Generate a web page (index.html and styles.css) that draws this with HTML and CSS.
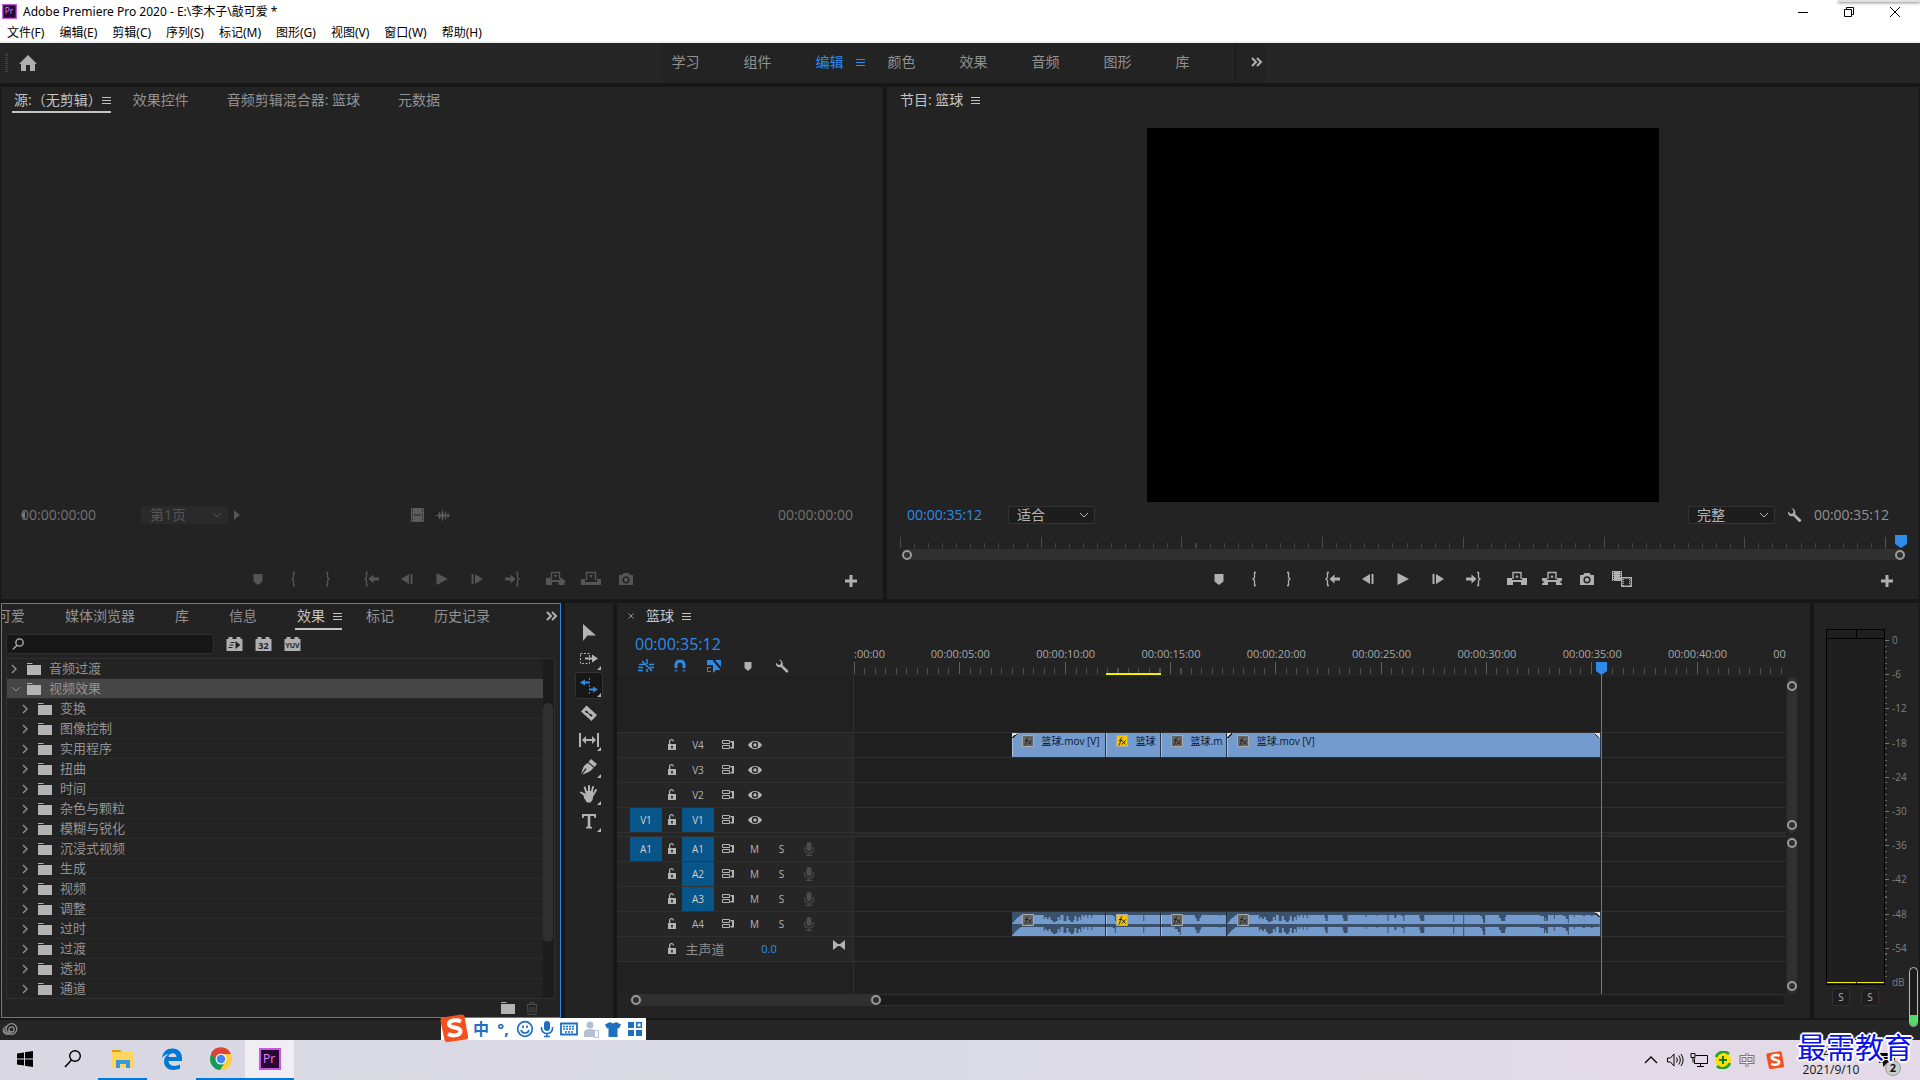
FILE: index.html
```html
<!DOCTYPE html>
<html lang="zh-CN">
<head>
<meta charset="utf-8">
<title>Adobe Premiere Pro 2020</title>
<link rel="stylesheet" href="styles.css">
</head>
<body>
<svg class="sprite" aria-hidden="true">
  <symbol id="menu" viewBox="0 0 9 9"><path d="M0 1h9M0 4h9M0 7h9" transform="translate(0 .5)" stroke="currentColor" fill="none"/></symbol>
  <symbol id="more" viewBox="0 0 12 10"><path d="M1 1l4 4-4 4M6 1l4 4-4 4" stroke="currentColor" stroke-width="2" fill="none"/></symbol>
  <symbol id="down" viewBox="0 0 10 6"><path d="M1 1l4 4 4-4" stroke="currentColor" fill="none"/></symbol>
  <symbol id="right" viewBox="0 0 6 10"><path d="M1 1l4 4-4 4" stroke="currentColor" stroke-width="1.400" fill="none"/></symbol>
  <symbol id="marker" viewBox="0 0 20 16"><path d="M5.500 3h9v7.500L10 14 5.500 10.500z"/></symbol>
  <symbol id="brace-l" viewBox="0 0 20 16"><path d="M12 1.500h-1.500V6.500L9 8l1.500 1.500v5H12" stroke="currentColor" stroke-width="1.300" fill="none"/></symbol>
  <symbol id="brace-r" viewBox="0 0 20 16"><path d="M8 1.500h1.500V6.500L11 8 9.500 9.500v5H8" stroke="currentColor" stroke-width="1.300" fill="none"/></symbol>
  <symbol id="goto-in" viewBox="0 0 20 16"><path d="M6 1.500H4.500V6.500L3 8l1.500 1.500v5H6" stroke="currentColor" stroke-width="1.300" fill="none"/><path d="M6.500 8l5-4.500v3H17v3h-5.500v3z"/></symbol>
  <symbol id="goto-out" viewBox="0 0 20 16"><path d="M14 1.500h1.500V6.500L17 8l-1.500 1.500v5H14" stroke="currentColor" stroke-width="1.300" fill="none"/><path d="M13.500 8l-5-4.500v3H3v3h5.500v3z"/></symbol>
  <symbol id="step-back" viewBox="0 0 20 16"><path d="M12 3v10L4 8zM13.500 3h2v10h-2z"/></symbol>
  <symbol id="step-fwd" viewBox="0 0 20 16"><path d="M8 3v10l8-5zM4.500 3h2v10h-2z"/></symbol>
  <symbol id="play" viewBox="0 0 20 16"><path d="M4.500 2v12L16 8z"/></symbol>
  <symbol id="insert" viewBox="0 0 20 16"><path d="M5.500 8V1.500h8V8" stroke="currentColor" stroke-width="1.400" fill="none"/><path d="M7.500 4h4L9.500 6.500zM0 7h5v2h9V7h2l4 3.500-1.500 1V14h-6v-3H6v3H0z"/></symbol>
  <symbol id="overwrite" viewBox="0 0 20 16"><path d="M5.500 9V1.500h9V9" stroke="currentColor" stroke-width="1.400" fill="none"/><path d="M8 4h4l-2 3zM0 8h4v3h12V8h4v6H0z"/></symbol>
  <symbol id="lift" viewBox="0 0 20 16"><path d="M6 8V1.500h8V8" stroke="currentColor" stroke-width="1.400" fill="none"/><path d="M8 6.500h4L10 4zM0 7h5v2h10V7h5v7h-6v-3H6v3H0z"/></symbol>
  <symbol id="extract" viewBox="0 0 20 16"><path d="M6 8V1.500h8V8" stroke="currentColor" stroke-width="1.400" fill="none"/><path d="M8 6.500h4L10 4zM0 7h5v2h10V7h5v2.500L17.500 11l2.500 1.500V14h-6v-3H6v3H0v-1.500L2.500 11 0 9.500z"/></symbol>
  <symbol id="camera" viewBox="0 0 20 16"><path fill-rule="evenodd" d="M3 4h3l1.500-2h5L14 4h3v10H3zM10 5.200a3.600 3.600 0 1 0 0 7.200 3.600 3.600 0 0 0 0-7.200zm0 1.500a2.100 2.100 0 1 1 0 4.200 2.100 2.100 0 0 1 0-4.200z"/></symbol>
  <symbol id="compare" viewBox="0 0 20 16"><path d="M0 0h10v10H0z"/><path d="M9.700 6.700h9.600v8.600H9.700z" fill="#232323" stroke="currentColor" stroke-width="1.400"/><path d="M1.500 1v9M8.500 1v5" stroke="#232323" stroke-dasharray="1 1"/><path d="M11.500 8v7M17.500 8v7" stroke="currentColor" stroke-dasharray="1 1"/></symbol>
  <symbol id="plus" viewBox="0 0 12 12"><path d="M4.500 0h3v4.500H12v3H7.500V12h-3V7.500H0v-3h4.500z"/></symbol>
  <symbol id="wrench" viewBox="0 0 16 16"><path d="M4.500.8 7 3.300 6.500 6 4 6.800 1.200 4.200C.6 6.500 1.800 9 4.500 9.300c.9.100 1.600 0 2.200-.2l5.800 6c1.600 1.200 3.600-.6 2.300-2.300L8.700 7.200C9.700 4 7.500.6 4.500.8z"/></symbol>
  <symbol id="folder" viewBox="0 0 14 12"><path d="M0 0h5.500v1H0zM0 2h14v10H0z"/></symbol>
  <symbol id="lock" viewBox="0 0 10 12"><path fill-rule="evenodd" d="M1 6V5h1V2.500C2 1 3 0 4.500 0S7 1 7 2.500H5.800C5.800 1.600 5.300 1.200 4.500 1.200S3.300 1.600 3.300 2.500V5H9v6H1zM4 7v1.500h.5V10h1V8.500H6V7z"/></symbol>
  <symbol id="sync" viewBox="0 0 12 10"><path d="M.5.500h7v3h-7zM.5 5.500h7v3h-7z" fill="none" stroke="currentColor"/><path d="M8.500 1H12v7.500H8.500V7H10V2.500H8.500z"/></symbol>
  <symbol id="eye" viewBox="0 0 14 10"><path fill-rule="evenodd" d="M0 5C3-.5 11-.5 14 5 11 10.500 3 10.500 0 5zm7-3.200a3.200 3.200 0 1 0 0 6.400 3.200 3.200 0 0 0 0-6.400z"/><circle cx="7" cy="5" r="1.700"/></symbol>
  <symbol id="mic" viewBox="0 0 10 14"><rect x="2.500" width="5" height="9" rx="2.500"/><path d="M.7 5v2.500C.7 10 2.500 11 5 11s4.300-1 4.300-3.500V5M5 11v2.500M2 13.400h6" fill="none" stroke="currentColor" stroke-width="1.100"/></symbol>
  <symbol id="sogou" viewBox="0 0 28 28"><path d="M3 3.500 21 .5q3-.5 3.500 2L28 22q.5 3-2 3.500L8 28q-3 .5-3.500-2L.5 7Q0 4 3 3.500z" fill="#f4511e"/><path d="M21 7.500C16 5 8.500 6.500 9 10.500c.5 4 11 2 11.500 6.500.3 4.500-7.500 5.500-12.500 3" fill="none" stroke="#fff" stroke-width="4"/></symbol>
  <symbol id="fx" viewBox="0 0 12 12"><path d="M.5.500h11v11H.5z"/><path d="M2.500 10.500C4.500 10.500 4 2.500 6.300 2.500M3 5.500h3M6 5.500l3.500 4M9.800 5.500 5.600 9.500" fill="none" stroke="#222" stroke-width="1"/></symbol>
  <symbol id="pr" viewBox="0 0 22 22"><path d="M1 1h20v20H1z" fill="#2a0634" stroke="#c45ae0" stroke-width="2"/><text x="4" y="15" font-size="12" fill="#e38bff" font-family="Open Sans, sans-serif">Pr</text></symbol>
</svg>

<header class="window-head">
  <div class="title-bar">
    <svg class="app-icon"><use href="#pr"/></svg>
    <h1>Adobe Premiere Pro 2020 - E:\李木子\敲可爱 *</h1>
    <div class="window-buttons">
      <button aria-label="最小化"><svg viewBox="0 0 10 10"><path d="M0 5.500h10" stroke="#000"/></svg></button>
      <button aria-label="还原"><svg viewBox="0 0 10 10"><path d="M.5 2.500h7v7h-7zM2.500 2.500v-2h7v7h-2" fill="none" stroke="#000"/></svg></button>
      <button aria-label="关闭"><svg viewBox="0 0 10 10"><path d="M0 0l10 10M10 0L0 10" stroke="#000"/></svg></button>
    </div>
  </div>
  <nav class="menu-bar">
    <button>文件(F)</button><button>编辑(E)</button><button>剪辑(C)</button><button>序列(S)</button><button>标记(M)</button><button>图形(G)</button><button>视图(V)</button><button>窗口(W)</button><button>帮助(H)</button>
  </nav>
  <div class="corner-popup"></div>
</header>

<nav class="workspace-bar">
  <div class="grip"></div>
  <button class="home" aria-label="主页"><svg viewBox="0 0 18 16"><path d="M9 0l9 9h-2v7h-5v-6H7v6H2V9H0z"/></svg></button>
  <div class="workspaces">
    <button>学习</button><button>组件</button><button class="on">编辑<svg class="menu-i"><use href="#menu"/></svg></button><button>颜色</button><button>效果</button><button>音频</button><button>图形</button><button class="last">库</button>
    <button class="overflow" aria-label="更多"><svg class="more-i"><use href="#more"/></svg></button>
  </div>
</nav>

<main class="panels">
  <div class="row-top">
    <section class="panel monitor source">
      <div class="tabs">
        <button class="on line">源:（无剪辑）<svg class="menu-i"><use href="#menu"/></svg></button><button>效果控件</button><button>音频剪辑混合器: 篮球</button><button>元数据</button>
      </div>
      <div class="viewer"></div>
      <div class="info dim">
        <span class="tc start">00:00:00:00</span>
        <button class="drop page">第1页<svg class="down-i"><use href="#down"/></svg></button>
        <button class="next" aria-label="下一页"><svg viewBox="0 0 6 10"><path d="M0 0l6 5-6 5z"/></svg></button>
        <span class="media"><svg viewBox="0 0 40 14"><path fill-rule="evenodd" d="M0 0h13v14H0zM3 6.500v1h7v-1z"/><path d="M1.500 1v13M11.500 1v13" stroke="#232323" stroke-dasharray="1 1"/><path d="M25 7h14v1H25zM27 7.500l1.500-4 1.500 4-1.500 4zM30 7.500l1.500-6.500 1.500 6.500-1.500 6.500zM33.500 7.500l1-5 1 5-1 5zM36 7.500l1-3 1 3-1 3z"/></svg></span>
        <span class="tc">00:00:00:00</span>
      </div>
      <div class="transport dim">
        <div class="group"><button aria-label="标记"><svg><use href="#marker"/></svg></button><button aria-label="入点"><svg><use href="#brace-l"/></svg></button><button aria-label="出点"><svg><use href="#brace-r"/></svg></button></div>
        <div class="group"><button aria-label="转到入点"><svg><use href="#goto-in"/></svg></button><button aria-label="后退一帧"><svg><use href="#step-back"/></svg></button><button aria-label="播放"><svg><use href="#play"/></svg></button><button aria-label="前进一帧"><svg><use href="#step-fwd"/></svg></button><button aria-label="转到出点"><svg><use href="#goto-out"/></svg></button></div>
        <div class="group"><button aria-label="插入"><svg><use href="#insert"/></svg></button><button aria-label="覆盖"><svg><use href="#overwrite"/></svg></button><button aria-label="导出帧"><svg><use href="#camera"/></svg></button></div>
        <button class="add" aria-label="按钮编辑器"><svg><use href="#plus"/></svg></button>
      </div>
    </section>

    <section class="panel monitor program">
      <div class="tabs"><button class="on">节目: 篮球<svg class="menu-i"><use href="#menu"/></svg></button></div>
      <div class="viewer"><div class="frame"></div></div>
      <div class="info">
        <span class="tc blue">00:00:35:12</span>
        <button class="drop fit">适合<svg class="down-i"><use href="#down"/></svg></button>
        <button class="drop quality">完整<svg class="down-i"><use href="#down"/></svg></button>
        <button class="settings" aria-label="设置"><svg><use href="#wrench"/></svg></button>
        <span class="tc">00:00:35:12</span>
      </div>
      <div class="mini-ruler"><div class="ticks"></div><svg class="head" viewBox="0 0 12 13"><path d="M0 0h12v9l-6 4-6-4z"/></svg></div>
      <div class="zoom-bar"><i></i><i></i></div>
      <div class="transport">
        <div class="group"><button aria-label="标记"><svg><use href="#marker"/></svg></button><button aria-label="入点"><svg><use href="#brace-l"/></svg></button><button aria-label="出点"><svg><use href="#brace-r"/></svg></button></div>
        <div class="group"><button aria-label="转到入点"><svg><use href="#goto-in"/></svg></button><button aria-label="后退一帧"><svg><use href="#step-back"/></svg></button><button aria-label="播放"><svg><use href="#play"/></svg></button><button aria-label="前进一帧"><svg><use href="#step-fwd"/></svg></button><button aria-label="转到出点"><svg><use href="#goto-out"/></svg></button></div>
        <div class="group"><button aria-label="提升"><svg><use href="#lift"/></svg></button><button aria-label="提取"><svg><use href="#extract"/></svg></button><button aria-label="导出帧"><svg><use href="#camera"/></svg></button><button aria-label="比较视图"><svg><use href="#compare"/></svg></button></div>
        <button class="add" aria-label="按钮编辑器"><svg><use href="#plus"/></svg></button>
      </div>
    </section>
  </div>

  <div class="row-bottom">
    <section class="panel effects">
      <div class="tabs">
        <button class="cut">可爱</button><button>媒体浏览器</button><button>库</button><button>信息</button><button class="on line">效果<svg class="menu-i"><use href="#menu"/></svg></button><button>标记</button><button>历史记录</button>
        <button class="tabs-more" aria-label="更多"><svg class="more-i"><use href="#more"/></svg></button>
      </div>
      <div class="filters">
        <label class="search"><svg viewBox="0 0 12 12"><circle cx="7.500" cy="4.500" r="3.700"/><path d="M5 7.200.8 11.400"/></svg><input type="text" aria-label="搜索效果"></label>
        <button class="badge" aria-label="加速效果"><svg viewBox="0 0 16 14"><path d="M0 2h2V0h4v2h4V0h4v2h2v12H0z"/><path d="M9 4v8l5-4z" fill="#232323"/><path d="M4 5.500h4M3 8h4M2 10.500h4" stroke="#232323"/></svg></button>
        <button class="badge" aria-label="32 位颜色"><svg viewBox="0 0 16 14"><path d="M0 2h2V0h4v2h4V0h4v2h2v12H0z"/><text x="8" y="12" font-size="9" font-weight="700" text-anchor="middle" fill="#232323">32</text></svg></button>
        <button class="badge" aria-label="YUV 效果"><svg viewBox="0 0 16 14"><path d="M0 2h2V0h4v2h4V0h4v2h2v12H0z"/><text x="8" y="11" font-size="7" font-weight="700" text-anchor="middle" fill="#232323">YUV</text></svg></button>
      </div>
      <div class="tree">
        <ul>
          <li class="root"><svg class="right-i"><use href="#right"/></svg><svg class="folder-i"><use href="#folder"/></svg>音频过渡</li>
          <li class="root open"><svg class="down-i"><use href="#down"/></svg><svg class="folder-i"><use href="#folder"/></svg>视频效果</li>
          <li><svg class="right-i"><use href="#right"/></svg><svg class="folder-i"><use href="#folder"/></svg>变换</li>
          <li><svg class="right-i"><use href="#right"/></svg><svg class="folder-i"><use href="#folder"/></svg>图像控制</li>
          <li><svg class="right-i"><use href="#right"/></svg><svg class="folder-i"><use href="#folder"/></svg>实用程序</li>
          <li><svg class="right-i"><use href="#right"/></svg><svg class="folder-i"><use href="#folder"/></svg>扭曲</li>
          <li><svg class="right-i"><use href="#right"/></svg><svg class="folder-i"><use href="#folder"/></svg>时间</li>
          <li><svg class="right-i"><use href="#right"/></svg><svg class="folder-i"><use href="#folder"/></svg>杂色与颗粒</li>
          <li><svg class="right-i"><use href="#right"/></svg><svg class="folder-i"><use href="#folder"/></svg>模糊与锐化</li>
          <li><svg class="right-i"><use href="#right"/></svg><svg class="folder-i"><use href="#folder"/></svg>沉浸式视频</li>
          <li><svg class="right-i"><use href="#right"/></svg><svg class="folder-i"><use href="#folder"/></svg>生成</li>
          <li><svg class="right-i"><use href="#right"/></svg><svg class="folder-i"><use href="#folder"/></svg>视频</li>
          <li><svg class="right-i"><use href="#right"/></svg><svg class="folder-i"><use href="#folder"/></svg>调整</li>
          <li><svg class="right-i"><use href="#right"/></svg><svg class="folder-i"><use href="#folder"/></svg>过时</li>
          <li><svg class="right-i"><use href="#right"/></svg><svg class="folder-i"><use href="#folder"/></svg>过渡</li>
          <li><svg class="right-i"><use href="#right"/></svg><svg class="folder-i"><use href="#folder"/></svg>透视</li>
          <li><svg class="right-i"><use href="#right"/></svg><svg class="folder-i"><use href="#folder"/></svg>通道</li>
        </ul>
        <div class="tree-scroll"><i></i></div>
      </div>
      <div class="tree-foot">
        <button aria-label="新建素材箱"><svg class="folder-i"><use href="#folder"/></svg></button>
        <button aria-label="删除"><svg class="trash" viewBox="0 0 12 13"><path d="M.5 2.500h11M4 2.500V.5h4v2M1.500 2.500l.5 10h8l.5-10M4 5v5.500M6 5v5.500M8 5v5.500" fill="none" stroke="#4a4a4a"/></svg></button>
      </div>
    </section>

    <section class="panel tools">
      <button aria-label="选择"><svg viewBox="0 0 20 20"><path d="M4 2v17l4.500-5.500H17z"/></svg></button>
      <button class="sub" aria-label="向前选择轨道"><svg viewBox="0 0 20 20"><path d="M1.500 4.500h9v10h-9z" fill="none" stroke="currentColor" stroke-dasharray="2 1.500"/><path d="M6 8.500h7V5.500l6 4-6 4v-3H6z"/></svg></button>
      <button class="sub on" aria-label="波纹编辑"><svg viewBox="0 0 20 20"><path d="M1 6.500 6 3.500v2h4v2H6v2zM19 13.500l-5 3v-2h-3v-2h3v-2z"/><path d="M10.500 2v17" stroke="currentColor" stroke-dasharray="2 1.500"/></svg></button>
      <button aria-label="剃刀"><svg viewBox="0 0 20 20"><path fill-rule="evenodd" d="M7.500 2.500 18 12l-5.500 6L2 8.500zM7 7.500l-1.200 1 1.500 1.500 2 .5 1.500 2 1.800 1.200 1-1-1.500-1.700-2-.5-1.500-2z"/></svg></button>
      <button class="sub" aria-label="外滑"><svg viewBox="0 0 20 20"><path d="M1 3v14M19 3v14" stroke="currentColor" stroke-width="2"/><path d="M3 10l4-4v3h6V6l4 4-4 4v-3H7v3z"/></svg></button>
      <button class="sub" aria-label="钢笔"><svg viewBox="0 0 20 20"><path d="M12 2l6 5-2.500 3-6-5zM9 6l5.500 4.500C13 14 8 16 3.500 17.500L7.500 12 6.500 11 2.500 17C3 12 5 7.500 9 6z"/></svg></button>
      <button class="sub" aria-label="手形"><svg viewBox="0 0 20 20"><path d="M6 11 2 8.500M7.500 9 5.800 3.500M10 9V2M12.500 9l1.500-6M14 11l3-5" stroke="currentColor" stroke-width="2" stroke-linecap="round"/><path d="M4 8.500 7 10l.5-3h6l1 3-1 6-2 2.500H8L5 14z"/></svg></button>
      <button class="sub" aria-label="文字"><svg viewBox="0 0 20 20"><path d="M3 3h14v4h-1.500l-.5-2h-3.700v10.500L13 16v1.500H7V16l1.700-.5V5H5l-.5 2H3z"/></svg></button>
    </section>

    <section class="panel timeline">
      <div class="tabs seq"><button class="close" aria-label="关闭序列"><svg viewBox="0 0 6 6"><path d="M.5.500l5 5M5.500.500l-5 5" stroke="currentColor"/></svg></button><button class="on">篮球<svg class="menu-i"><use href="#menu"/></svg></button></div>
      <div class="tl-body">
        <div class="tl-main">
          <div class="tl-top">
            <div class="tl-control">
              <span class="big-tc">00:00:35:12</span>
              <div class="toggles">
                <button aria-label="嵌套"><svg viewBox="0 0 16 14"><path d="M9 0v5M9 10v3M1 5.500h5M0 8.500h5M0 11.500h5M11 5.500h5M12 8.500h4M4 2l10 10" stroke="currentColor" stroke-width="1.500"/></svg></button>
                <button aria-label="对齐"><svg viewBox="0 0 16 14"><path d="M4 9V6.500C4 3.500 5.500 2 8 2s4 1.500 4 4.500V9" stroke="currentColor" stroke-width="3" fill="none"/><path d="M4 10v3M12 10v3" stroke="#17548f" stroke-width="3"/></svg></button>
                <button aria-label="链接选择"><svg viewBox="0 0 16 14"><path d="M1 1h6v5H1zM9 1h6v7zM7 2v12l3-3h4.500z"/><path d="M5 8.500H1.500v4H5" stroke="currentColor" fill="none"/></svg></button>
                <button class="grey" aria-label="添加标记"><svg viewBox="0 0 16 14"><path d="M4.500 3h7v6L8 12 4.500 9z"/></svg></button>
                <button class="grey" aria-label="时间轴设置"><svg><use href="#wrench"/></svg></button>
              </div>
            </div>
            <div class="ruler">
              <div class="marks">
                <div><span class="first">:00:00</span></div><div><span>00:00:05:00</span></div><div><span>00:00:10:00</span></div><div><span>00:00:15:00</span></div><div><span>00:00:20:00</span></div><div><span>00:00:25:00</span></div><div><span>00:00:30:00</span></div><div><span>00:00:35:00</span></div><div><span>00:00:40:00</span></div><div><span>00:00:45:00</span></div>
              </div>
              <div class="render" style="left:27%;width:5.900%"></div>
            </div>
          </div>

          <div class="track spacer"><div class="th"></div><div class="lane"></div></div>
          <div class="track"><div class="th"><span></span><svg class="lock"><use href="#lock"/></svg><button class="tgt">V4</button><svg class="sync"><use href="#sync"/></svg><svg class="eye"><use href="#eye"/></svg></div>
            <div class="lane clips">
              <div class="blank" style="width:16.900%"></div>
              <div class="clip in" style="width:10.100%"><svg class="fx"><use href="#fx"/></svg><span>篮球.mov [V]</span></div>
              <div class="clip" style="width:5.900%"><svg class="fx yellow"><use href="#fx"/></svg><span>篮球</span></div>
              <div class="clip" style="width:7.100%"><svg class="fx"><use href="#fx"/></svg><span>篮球.m</span></div>
              <div class="clip in out" style="width:40.100%"><svg class="fx"><use href="#fx"/></svg><span>篮球.mov [V]</span></div>
            </div></div>
          <div class="track"><div class="th"><span></span><svg class="lock"><use href="#lock"/></svg><button class="tgt">V3</button><svg class="sync"><use href="#sync"/></svg><svg class="eye"><use href="#eye"/></svg></div><div class="lane"></div></div>
          <div class="track"><div class="th"><span></span><svg class="lock"><use href="#lock"/></svg><button class="tgt">V2</button><svg class="sync"><use href="#sync"/></svg><svg class="eye"><use href="#eye"/></svg></div><div class="lane"></div></div>
          <div class="track"><div class="th"><button class="tgt sel">V1</button><svg class="lock"><use href="#lock"/></svg><button class="tgt sel">V1</button><svg class="sync"><use href="#sync"/></svg><svg class="eye"><use href="#eye"/></svg></div><div class="lane"></div></div>
          <div class="divider"></div>
          <div class="track"><div class="th"><button class="tgt sel">A1</button><svg class="lock"><use href="#lock"/></svg><button class="tgt sel">A1</button><svg class="sync"><use href="#sync"/></svg><button>M</button><button>S</button><svg class="mic"><use href="#mic"/></svg></div><div class="lane"></div></div>
          <div class="track"><div class="th"><span></span><svg class="lock"><use href="#lock"/></svg><button class="tgt sel">A2</button><svg class="sync"><use href="#sync"/></svg><button>M</button><button>S</button><svg class="mic"><use href="#mic"/></svg></div><div class="lane"></div></div>
          <div class="track"><div class="th"><span></span><svg class="lock"><use href="#lock"/></svg><button class="tgt sel">A3</button><svg class="sync"><use href="#sync"/></svg><button>M</button><button>S</button><svg class="mic"><use href="#mic"/></svg></div><div class="lane"></div></div>
          <div class="track"><div class="th"><span></span><svg class="lock"><use href="#lock"/></svg><button class="tgt">A4</button><svg class="sync"><use href="#sync"/></svg><button>M</button><button>S</button><svg class="mic"><use href="#mic"/></svg></div>
            <div class="lane clips">
              <div class="blank" style="width:16.900%"></div>
              <div class="clip in" style="width:10.100%"><svg class="wave" viewBox="0 0 94 24" preserveAspectRatio="none"><g id="w1"><path d="M0 0h94v3H81v3h-1V3h-3v3h-1V3h-3v2h-1V3h-2v5h-1V5h-2v4h-2V4h-2v4h-1v2h-3V8h-2V4h-2v5h-3V3h-3v5h-1V5h-2v4h-2v1h-3V8h-2V5h-2v2h-2V5h-2v2h-1V3H9L4 7 0 12z"/></g><use href="#w1" y="12"/></svg><svg class="fx"><use href="#fx"/></svg></div>
              <div class="clip" style="width:5.900%"><svg class="wave" viewBox="0 0 55 24" preserveAspectRatio="none"><g id="w2"><path d="M0 0h55v3H39v6h-1V3H10v6H9V4H7V3H0z"/></g><use href="#w2" y="12"/></svg><svg class="fx yellow"><use href="#fx"/></svg></div>
              <div class="clip" style="width:7.100%"><svg class="wave" viewBox="0 0 66 24" preserveAspectRatio="none"><g id="w3"><path d="M0 0h66v3h-6v1h-1V3H41l-1 3h-1v3h-3V6h-1l-1-3H20v8h-1V8h-2V5h-3V3H0z"/></g><use href="#w3" y="12"/></svg><svg class="fx"><use href="#fx"/></svg></div>
              <div class="clip in out" style="width:40.100%"><svg class="wave" viewBox="0 0 374 24" preserveAspectRatio="none"><g id="w4"><path d="M0 0h374v3h-7v1h-2V3h-6v1h-2V3h-8v2h-1V3h-5v8h-1V7h-2V4h-3V3h-8v4h-1V3h-6v6h-2V6h-1v3h-1V4h-4V3h-34v2h-1v4h-4V6h-2V3h-14v8h-2V7h-1V4h-2V3h-16v9h-1V3h-9v7h-1V3h-29v6h-4V6h-1V3h-15v6h-1V4h-2V3h-5v3h-2V3h-6v6h-1V3h-10v1h-1V3h-10v2h-1V3h-18v6h-4V6h-1V3h-15v6h-2V6h-1V3H81v3h-1V3h-3v3h-1V3h-3v2h-1V3h-2v5h-1V5h-2v4h-2V4h-2v4h-1v2h-3V8h-2V4h-2v5h-3V3h-3v5h-1V5h-2v4h-2v1h-3V8h-2V5h-2v2h-2V5h-2v2h-1V3H9L4 7 0 12z"/></g><use href="#w4" y="12"/></svg><svg class="fx"><use href="#fx"/></svg></div>
            </div></div>
          <div class="track"><div class="th master"><span></span><svg class="lock"><use href="#lock"/></svg><span class="name">主声道</span><span class="level">0.0</span><svg class="bow" viewBox="0 0 12 10"><path d="M0 0l5 4h2l5-4v10L7 6H5l-5 4z"/></svg></div><div class="lane"></div></div>
          <div class="track end"><div class="th"></div><div class="lane"></div></div>
          <div class="playhead-area"><div class="playhead" style="left:80.150%"><svg viewBox="0 0 11 13"><path d="M0 0h11v9l-5.500 4L0 9z" fill="#2d8ceb"/></svg></div></div>
        </div>
        <div class="v-bars"><div class="v-bar video"><i></i><i></i></div><div class="v-bar audio"><i></i><i></i></div></div>
      </div>
      <div class="h-bar"><div class="thumb"><i></i><i></i></div></div>
    </section>

    <section class="panel meters">
      <div class="meter-main">
        <div class="meter"><div class="peak"></div><div class="peak"></div><div class="bar"></div><div class="bar"></div></div>
        <div class="scale"><span>0</span><span>-6</span><span>-12</span><span>-18</span><span>-24</span><span>-30</span><span>-36</span><span>-42</span><span>-48</span><span>-54</span><span>dB</span></div>
      </div>
      <div class="solo"><button>S</button><button>S</button></div>
    </section>
  </div>
</main>

<footer class="status"><svg viewBox="0 0 16 13"><g fill="none" stroke="currentColor" stroke-width="1.200"><circle cx="9.500" cy="6" r="5.300"/><path d="M5 3.500a4 4 0 1 0 2.500 7.300L10 8.500"/><circle cx="9.500" cy="6.500" r="2.600"/><path d="M4.500 6a2 2 0 1 0 1.500 3.500l2-2"/></g></svg></footer>

<footer class="taskbar">
  <div class="apps">
    <button aria-label="开始"><svg viewBox="0 0 24 24"><path d="M4 6.500l7-1V11.500H4zM12 5.300l8-1.300v7.500h-8zM4 12.500h7v6l-7-1zM12 12.500h8V20l-8-1.300z" fill="#000"/></svg></button>
    <button aria-label="搜索"><svg viewBox="0 0 24 24"><circle cx="13" cy="9" r="5.300" fill="none" stroke="#000" stroke-width="1.400"/><path d="M9.500 13 3 20" stroke="#000" stroke-width="1.500"/></svg></button>
    <button class="run" aria-label="资源管理器"><svg viewBox="0 0 24 24"><path d="M1 3h8l2 2H1z" fill="#dfa100"/><path d="M1 5h22v15H1z" fill="#ffd55e"/><path d="M5 13h14v8h-4v-4H9v4H5z" fill="#3a96dd"/></svg></button>
    <button aria-label="Edge"><svg viewBox="0 0 24 24"><path d="M2 11C3 4.500 7 1.500 12.500 1.500 19 1.500 22 6 22 11v3H8.500c.3 5.500 7 6 11.500 3.500v4C12 25 4 22 4 14.500c0-3.500 2-6 5-7.500C6.500 7 4 8.500 2 11zm6.500-1h8C16.500 5 9 5 8.500 10z" fill="#0078d7"/></svg></button>
    <button class="run" aria-label="Chrome"><svg viewBox="0 0 24 24"><circle cx="12" cy="12" r="11" fill="#ffcd40"/><path d="M12 12 2.500 6.500A11 11 0 0 0 11 23l5-8z" fill="#0f9d58"/><path d="M12 7h10a11 11 0 0 0-20-.8l5 7z" fill="#db4437"/><circle cx="12" cy="12" r="5.500" fill="#f1f1f1"/><circle cx="12" cy="12" r="4.200" fill="#4285f4"/></svg></button>
    <button class="run active" aria-label="Premiere Pro"><svg><use href="#pr"/></svg></button>
  </div>
  <div class="tray">
    <svg viewBox="0 0 18 18"><path d="M3 12l6-6 6 6" fill="none" stroke="#000" stroke-width="1.300"/></svg>
    <svg viewBox="0 0 18 18"><path d="M1.500 7h3l3.500-4v12l-3.500-4h-3zM10.500 6.500q1.800 2.500 0 5M12.700 4.500q3.200 4.500 0 9M15 3q4.200 6 0 12" fill="none" stroke="#000"/></svg>
    <svg viewBox="0 0 18 18"><path d="M5.500 4.500h12v8h-13v-5M1 2.500h4v4H1zM3 6.500v5M10.500 12.500v3M7 15.500h7" fill="none" stroke="#000"/></svg>
    <svg viewBox="0 0 18 18"><circle cx="9" cy="9" r="8" fill="#ffe100"/><path d="M2 6a8 8 0 0 1 13-3M16 12a8 8 0 0 1-13 3" stroke="#25a038" stroke-width="2.500" fill="none"/><path d="M9 5v8M5 9h8" stroke="#0a7a2a" stroke-width="2"/></svg>
    <svg viewBox="0 0 18 18"><path d="M3 5.500h12v6H3zM9 2v14" fill="none" stroke="#777" stroke-width="3"/><path d="M3 5.500h12v6H3zM9 2v14" fill="none" stroke="#f0edf4"/></svg>
    <svg class="sg"><use href="#sogou"/></svg>
    <div class="clock"><span>12:26</span><span>2021/9/10</span></div>
    <div class="notify"><svg viewBox="0 0 18 18"><path d="M1 2h16v10H9l-4 4v-4H1z" fill="#000"/><path d="M3 5.500h12M3 8.500h12" stroke="#e0dae8"/></svg><b>2</b></div>
  </div>
</footer>

<div class="ime">
  <svg class="ime-logo"><use href="#sogou"/></svg>
  <button class="zh">中</button>
  <button class="zh">°,</button>
  <button aria-label="表情"><svg viewBox="0 0 18 18"><g fill="none" stroke="currentColor" stroke-width="1.700"><circle cx="9" cy="9" r="7.300"/><path d="M5 10c1 4 7 4 8 0M7 5.500v2.500M11 5.500v2.500"/></g></svg></button>
  <button aria-label="语音"><svg viewBox="0 0 18 18"><rect x="6" y="1" width="6" height="10" rx="3"/><path d="M3.500 7v1.500a5.500 5 0 0 0 11 0V7M9 13v4M6 16.500h6" fill="none" stroke="currentColor" stroke-width="1.600"/></svg></button>
  <button aria-label="键盘"><svg viewBox="0 0 18 18"><path d="M1 3.500h16v11H1z" fill="none" stroke="currentColor" stroke-width="1.800"/><path d="M3 6.500h12M3 9h12M5 12h8" stroke="currentColor" stroke-width="1.500" stroke-dasharray="2 1"/></svg></button>
  <button class="pale" aria-label="账户"><svg viewBox="0 0 18 18"><circle cx="8" cy="5" r="3.500"/><path d="M2 17v-4q0-4 6-4t6 4v4z"/><path d="M12.500 10.500h4v7h-4z" fill="#fff" stroke="currentColor"/></svg></button>
  <button aria-label="皮肤"><svg viewBox="0 0 18 18"><path d="M6 2q3 2.500 6 0l5 2.500-2 4-1.500-.5v9h-9V8L3 8.500l-2-4z"/></svg></button>
  <button aria-label="工具箱"><svg viewBox="0 0 18 18"><path d="M2 2h6v6H2zM2 10h6v6H2zM10 10h6v6h-6z"/><path d="M10.800 2.800h4.500v4.500h-4.500z" fill="none" stroke="currentColor" stroke-width="1.600"/></svg></button>
</div>
<div class="volume"><i></i></div>
<div class="watermark">最需教育</div>
</body>
</html>
```
FILE: styles.css
```css
* { box-sizing: border-box; }
html, body { height: 100%; }
body {
  margin: 0;
  display: flex;
  flex-direction: column;
  min-height: 640px;
  overflow: hidden;
  position: relative;
  background: #171717;
  color: #929292;
  font: 14px/20px "Open Sans", "Noto Sans CJK SC", sans-serif;
}
button {
  display: flex;
  align-items: center;
  justify-content: center;
  padding: 0;
  border: 0;
  background: none;
  color: inherit;
  font: inherit;
  white-space: nowrap;
}
svg { display: block; flex: none; fill: currentColor; }
.sprite { position: absolute; width: 0; height: 0; }
.menu-i { width: 9px; height: 9px; }
.more-i { width: 12px; height: 10px; color: #b0b0b0; }
.down-i { width: 10px; height: 6px; }
.right-i { width: 6px; height: 10px; }
.folder-i { width: 14px; height: 12px; color: #b4b4b4; }

/* window head */
.window-head {
  position: relative;
  flex: none;
  background: #fff;
  color: #000;
  border-bottom: 2px solid #f0f3f1;
  font-family: "Noto Sans", "Noto Sans CJK SC", sans-serif;
  font-size: 12px;
  line-height: 16px;
}
.title-bar { display: flex; align-items: center; height: 23px; padding-left: 2px; gap: 6px; }
.title-bar h1 { margin: 0; flex: 1; font-size: 12px; font-weight: 400; }
.app-icon { width: 15px; height: 15px; }
.window-buttons { display: flex; padding-right: 2px; }
.window-buttons button { width: 46px; height: 20px; }
.window-buttons svg { width: 10px; height: 10px; }
.menu-bar { display: flex; gap: 15px; height: 18px; padding-left: 7px; }
.menu-bar button { height: 20px; }
.corner-popup { position: absolute; top: 0; right: 0; width: 82px; height: 2px; background: #e0e0e0; box-shadow: 0 1px 3px #777; }

/* workspaces */
.workspace-bar { flex: none; display: flex; align-items: center; height: 40px; margin-bottom: 4px; background: #262626; position: relative; }
.grip { width: 3px; height: 20px; margin-left: 5px; background: repeating-linear-gradient(#444 0 1px, transparent 1px 2px); }
.home { margin-left: 11px; color: #b0b0b0; }
.home svg { width: 18px; height: 16px; }
.workspaces { display: flex; position: absolute; left: 34.400%; height: 40px; padding: 0 0 2px 11px; background: #232323; }
.workspaces button { width: 72px; justify-content: flex-start; gap: 13px; }
.workspaces .on { color: #2d8ceb; }
.workspaces .last { width: 60px; }
.workspaces .overflow { width: 31px; border-left: 1px solid #171717; padding-left: 15px; }

/* panels */
.panels { flex: 1; min-height: 0; display: grid; grid-template-rows: 512fr 415fr; gap: 4px; padding: 0 1px; }
.row-top { display: grid; grid-template-columns: 882fr 1032fr; gap: 4px; min-height: 0; }
.row-bottom { display: grid; grid-template-columns: 560fr 48px 1193fr 105px; gap: 4px; min-height: 0; }
.panel { background: #232323; min-width: 0; min-height: 0; display: flex; flex-direction: column; }
.tabs { display: flex; align-items: flex-start; gap: 38px; flex: none; }
.tabs button { height: 26px; padding: 0 0 2px 2px; }
.tabs .on { color: #c4c4c4; gap: 8px; margin-right: -16px; }
.tabs .line { border-bottom: 2px solid #c4c4c4; padding-bottom: 0; }

/* monitors */
.monitor .tabs { height: 41px; padding-left: 11px; }
.monitor .tabs button, .seq button { padding-top: 2px; }
.source .tabs { gap: 36px; }
.source .tabs .on { gap: 0; }
.viewer { flex: 1; min-height: 0; display: flex; justify-content: center; }
.frame { height: 100%; aspect-ratio: 512 / 374; background: #000; }
.info { display: flex; align-items: center; height: 26px; padding: 0 30px 0 20px; flex: none; }
.dim { color: #747474; }
.blue { color: #2d8ceb; }
.start { position: relative; }
.start::before { content: ""; position: absolute; left: 0; top: 6px; border: 4px solid transparent; border-width: 4px 4px 4px 0; border-right-color: #777; }
.drop { justify-content: space-between; width: 87px; height: 18px; padding: 0 5px 0 8px; background: #1d1d1d; border: 1px solid #333; border-radius: 2px; color: #b4b4b4; }
.dim .drop { background: #2a2a2a; border-color: #2a2a2a; color: #555; }
.page { margin-left: 45px; }
.next { margin-left: 6px; color: #555; }
.next svg { width: 6px; height: 10px; }
.media { margin: 0 auto 0 171px; color: #5c5c5c; }
.media svg { width: 40px; height: 14px; }
.fit { margin-left: 26px; }
.quality { margin-left: auto; }
.settings { margin: 0 12px; color: #b0b0b0; }
.settings svg { width: 15px; height: 16px; }
.source .info { margin-bottom: 32px; }
.mini-ruler { position: relative; height: 11px; margin: 9px 0 1px 13px; flex: none; }
.ticks { height: 11px; width: 986px; max-width: 97%; border-right: 1px solid #555;
  background:
    repeating-linear-gradient(to right, #4c4c4c 0 1px, transparent 1px calc(100% / 7)),
    repeating-linear-gradient(to right, #444 0 1px, transparent 1px calc(100% / 70)) 0 100% / 100% 5px no-repeat; }
.head { position: absolute; right: 12px; top: -2px; width: 12px; height: 13px; color: #2d8ceb; }
.zoom-bar { height: 11px; margin: 0 14px 0 15px; display: flex; align-items: center; justify-content: space-between; background: #303030; border-radius: 6px; flex: none; }
i { display: block; width: 10px; height: 10px; border: 2px solid #9a9a9a; border-radius: 50%; }
.transport { flex: none; position: relative; display: flex; justify-content: center; gap: 9px; height: 39px; padding-bottom: 2px; color: #b0b0b0; }
.transport.dim { color: #555; }
.program .transport { padding-left: 35px; }
.group { display: flex; }
.group button { width: 35px; }
.group svg { width: 20px; height: 16px; }
.add { position: absolute; right: 26px; top: 15px; color: #b0b0b0; }
.add svg { width: 12px; height: 12px; }

/* effects */
.effects { border: 1px solid #3584dd; }
.effects .tabs { overflow: hidden; height: 30px; }
.effects .cut { margin-left: -7px; }
.tabs .tabs-more { margin-left: auto; padding-right: 2px; }
.filters { display: flex; align-items: center; gap: 12px; padding-left: 4px; flex: none; }
.search { display: flex; align-items: center; width: 208px; height: 20px; padding-left: 5px; background: #171717; border: 1px solid #303030; border-radius: 3px; }
.search svg { width: 12px; height: 12px; fill: none; stroke: #b4b4b4; stroke-width: 1.300; }
.search input { flex: 1; min-width: 0; border: 0; background: none; color: #c4c4c4; font: inherit; outline: 0; }
.badge { color: #b0b0b0; }
.badge svg { width: 17px; height: 14px; }
.tree { flex: 1; min-height: 0; display: flex; margin: 4px 5px 0 4px; border: 1px solid #303030; overflow: hidden; }
.tree ul { flex: 1; margin: 0; padding: 0; list-style: none; font-size: 13px; line-height: 19px; }
.tree li { display: flex; align-items: center; height: 20px; padding-left: 15px; border-bottom: 1px solid #2a2a2a; }
.tree li svg:first-child { margin-right: 10px; }
.tree .folder-i { margin-right: 8px; }
.tree .root { padding-left: 4px; }
.tree .open { background: #464646; }
.tree .open svg:first-child { margin-right: 6px; }
.tree-scroll { width: 11px; padding-top: 44px; background: #1c1c1c; }
.tree-scroll i { width: 10px; height: 239px; border: 0; border-radius: 5px; background: #303030; }
.tree-foot { display: flex; justify-content: flex-end; align-items: center; gap: 11px; height: 18px; padding-right: 22px; flex: none; }
.trash { width: 12px; height: 13px; }

/* tools */
.tools { align-items: center; padding-top: 15px; color: #b4b4b4; }
.tools button { position: relative; width: 28px; height: 27px; border: 1px solid transparent; border-radius: 3px; }
.tools svg { width: 20px; height: 20px; }
.tools .on { background: #171717; border-color: #333; color: #2d8ceb; }
.tools .sub::after { content: ""; position: absolute; right: 1px; bottom: 1px; border: 2px solid; border-color: transparent #b4b4b4 #b4b4b4 transparent; }

/* timeline */
.seq { height: 26px; padding-left: 9px; }
.tabs.seq { gap: 10px; }
.seq .close svg { width: 6px; height: 6px; }
.tl-body { display: flex; flex: 1; min-height: 0; }
.tl-main { position: relative; flex: 1; min-width: 0; display: flex; flex-direction: column; }
.tl-top { display: grid; grid-template-columns: 237px 1fr; height: 47px; flex: none; }
.tl-control { padding: 4px 0 0 18px; color: #2d8ceb; }
.big-tc { display: block; font-size: 16px; line-height: 22px; }
.toggles { display: flex; gap: 18px; padding-left: 3px; margin-top: 4px; }
.toggles svg { width: 16px; height: 14px; }
.grey { color: #b0b0b0; }
.ruler { position: relative; min-width: 0; overflow: hidden; border-bottom: 1px solid #282828; }
.marks { display: grid; grid-template-columns: repeat(10, 11.300%); height: 45px; font-size: 11px; line-height: 14px; color: #a8a8a8; }
.marks div { padding-top: 18px;
  background:
    linear-gradient(#606060, #606060) 0 100% / 1px 12px no-repeat,
    repeating-linear-gradient(to right, #505050 0 1px, transparent 1px 10%) 0 100% / 100% 6px no-repeat; }
.marks span { display: block; width: 60px; margin-left: -29px; text-align: center; }
.marks .first { margin-left: 0; text-align: left; }
.render { position: absolute; bottom: 0; height: 2px; background: #f0f000; }
.track { display: grid; grid-template-columns: 236px 1fr; height: 25px; flex: none; border-top: 1px solid #303030; }
.track.spacer { flex: 1; border: 0; }
.track.spacer .th, .track.end .th { background: #212121; }
.track.end { height: 33px; }
.th { display: grid; grid-template-columns: 32px 20px 32px 27px 27px 27px 27px; padding-left: 13px; align-items: center; justify-items: center; background: #262626; font-size: 10px; line-height: 14px; color: #b4b4b4; }
.th > button { width: 100%; height: 24px; }
.th .sel { background: #08558a; color: #d0d0d0; }
.lock { width: 10px; height: 12px; }
.sync { width: 12px; height: 10px; }
.eye { width: 14px; height: 10px; }
.mic { width: 10px; height: 14px; color: #4c4c4c; }
.master { grid-template-columns: 32px 20px 46px 82px 1fr; }
.master .name { font-size: 13px; color: #8e8e8e; }
.master .level { font-size: 11px; color: #2d8ceb; }
.bow { width: 12px; height: 10px; justify-self: end; margin: 0 8px 9px 0; }
.lane { border-left: 1px solid #303030; background: #202020; min-width: 0; }
.divider { height: 4px; flex: none; border-top: 1px solid #303030; background: #262626; }
.clips { display: flex; }
.blank { flex: none; }
.clip { position: relative; flex: none; display: flex; gap: 8px; height: 24px; padding: 2px 1px 0 10px; overflow: hidden; background: #739bce; border: solid #263347; border-width: 0 1px 0 0; box-shadow: inset 1px 0 #a9bfdd; color: #10151c; font-size: 10px; line-height: 13px; white-space: nowrap; }
.clip span { overflow: hidden; }
.clip.in::before, .clip.out::after { content: ""; position: absolute; top: 0; width: 5px; height: 5px; }
.clip.in::before { left: 0; background: linear-gradient(135deg, #ddd 50%, #202020 50% 65%, transparent 65%); }
.clip.out::after { right: 0; background: linear-gradient(225deg, #ddd 50%, #202020 50% 65%, transparent 65%); }
.wave { position: absolute; inset: 0; width: 100%; height: 24px; color: #3b506b; }
.fx { position: relative; width: 12px; height: 12px; fill: #646464; stroke: #aaa; }
.fx.yellow { fill: #f5c400; }
.playhead-area { position: absolute; left: 237px; right: 0; top: 33px; bottom: 0; pointer-events: none; }
.playhead { position: absolute; top: 0; bottom: 0; width: 1px; background: #2d8ceb; }
.playhead svg { width: 11px; height: 13px; margin-left: -5px; }
.v-bars { width: 24px; display: flex; flex-direction: column; gap: 4px; padding: 48px 13px 0 1px; }
.v-bar { display: flex; flex-direction: column; justify-content: space-between; padding: 4px 0 3px; border-radius: 5px; background: #303030; }
.v-bar.video { flex: 1; }
.v-bar.audio { height: 157px; flex: none; padding-top: 1px; }
.h-bar { height: 12px; margin: 0 24px 12px 13px; border: 1px solid #303030; border-radius: 6px; background: #1c1c1c; flex: none; }
.h-bar .thumb { display: flex; justify-content: space-between; width: 21.700%; height: 10px; border-radius: 5px; background: #303030; }

/* meters */
.meters { padding: 26px 0 12px 12px; }
.meter-main { flex: 1; display: flex; min-height: 0; }
.meter { width: 59px; display: grid; grid-template: 9px 1fr / 1fr 1fr; border: 1px solid #000; background: #1f1f1f; }
.peak { border-bottom: 1px solid #000; }
.peak + .peak { border-left: 1px solid #000; }
.bar { margin-bottom: 1px; border-bottom: 1px solid #f0f000; }
.bar + .bar { margin-left: 1px; }
.scale { display: flex; flex-direction: column; justify-content: space-between; margin: 11px 0 3px; padding-left: 7px; font-size: 10px; line-height: 0; color: #808080;
  background:
    repeating-linear-gradient(to bottom, #777 0 1px, transparent 1px 10%) 0 0 / 4px 100% no-repeat,
    repeating-linear-gradient(to bottom, #666 0 1px, transparent 1px calc(100% / 60)) 0 0 / 2px 100% no-repeat; }
.solo { display: flex; gap: 11px; padding: 3px 0 0 6px; }
.solo button { width: 18px; height: 18px; border: 1px solid #333; border-radius: 3px; background: #1e1e1e; color: #b0b0b0; font-size: 10px; line-height: 14px; }

/* bottom bars */
.status { flex: none; display: flex; align-items: center; height: 20px; margin-top: 2px; padding: 0 0 2px 2px; background: #262626; }
.status svg { width: 16px; height: 13px; }
.taskbar { flex: none; display: flex; justify-content: space-between; height: 40px; background: linear-gradient(90deg, #d8d7e2, #dadae6 50%, #e5dae7); color: #111; }
.apps { display: flex; }
.apps button { width: 49px; height: 40px; border-bottom: 2px solid transparent; }
.apps svg { width: 24px; height: 24px; }
.apps .run { border-color: #0078d7; background-clip: padding-box; }
.apps .run.active { background: #f0eef4; }
.apps .active svg { width: 22px; height: 22px; }
.tray { display: flex; align-items: center; gap: 6px; padding-right: 4px; }
.tray svg { width: 18px; height: 18px; }
.tray .sg { margin: 0 6px 0 4px; }
.clock { display: flex; flex-direction: column; align-items: center; width: 70px; font-size: 12px; line-height: 19px; }
.notify { position: relative; margin: 0 20px 0 6px; }
.notify b { position: absolute; left: 7px; top: 9px; width: 16px; height: 16px; border: 1px solid #999; border-radius: 50%; background: #ccc; font-size: 11px; line-height: 14px; text-align: center; }

/* overlays */
.ime { position: absolute; left: 441px; bottom: 40px; display: flex; align-items: center; gap: 4px; height: 22px; padding-left: 31px; width: 205px; background: #fff; color: #1e6fc0; }
.ime-logo { position: absolute; left: -1px; top: -4px; width: 28px; height: 28px; }
.ime button { width: 18px; }
.ime svg:not(.ime-logo) { width: 18px; height: 18px; }
.ime .zh { font-size: 16px; font-weight: 700; }
.ime .pale { color: #b3bfd6; }
.volume { position: absolute; right: 2px; bottom: 53px; display: flex; align-items: flex-end; width: 9px; height: 60px; border: 1px solid #bbb; border-radius: 5px; background: #1c1c1c; overflow: hidden; }
.volume i { width: 7px; height: 11px; border: 0; border-radius: 0 0 4px 4px; background: #55d968; }
.watermark { position: absolute; right: 7px; bottom: 15px; color: #0a12e8; font-size: 29px; line-height: 34px; text-shadow: 2px 0 #fff, -2px 0 #fff, 0 2px #fff, 0 -2px #fff, 1px 1px #fff, -1px -1px #fff, 1px -1px #fff, -1px 1px #fff; }
```
